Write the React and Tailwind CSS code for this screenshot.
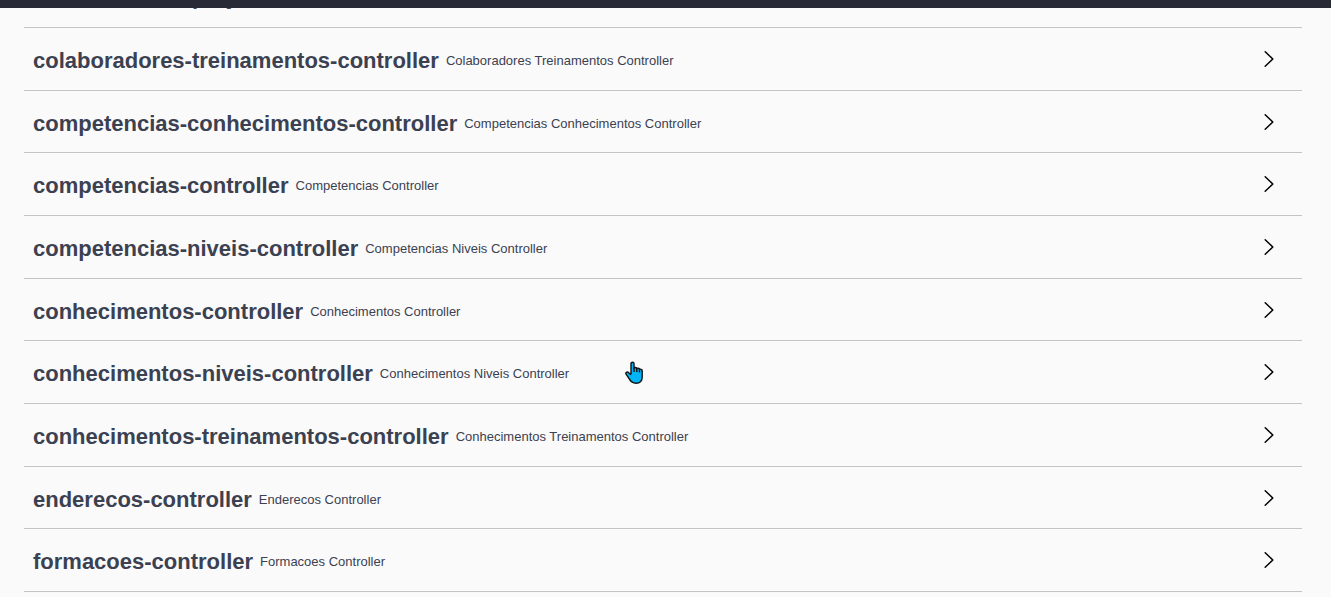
const controllers = [
  ["colaboradores-treinamentos-controller", "Colaboradores Treinamentos Controller"],
  ["competencias-conhecimentos-controller", "Competencias Conhecimentos Controller"],
  ["competencias-controller", "Competencias Controller"],
  ["competencias-niveis-controller", "Competencias Niveis Controller"],
  ["conhecimentos-controller", "Conhecimentos Controller"],
  ["conhecimentos-niveis-controller", "Conhecimentos Niveis Controller"],
  ["conhecimentos-treinamentos-controller", "Conhecimentos Treinamentos Controller"],
  ["enderecos-controller", "Enderecos Controller"],
  ["formacoes-controller", "Formacoes Controller"],
];

function Chevron() {
  return (
    <svg viewBox="0 0 10 16" className="h-4 w-[10px] shrink-0" fill="none" stroke="#000" strokeWidth="1.5" strokeLinecap="round" strokeLinejoin="round" aria-hidden="true">
      <path d="M1.2 0.8L8.8 8L1.2 15.2" />
    </svg>
  );
}

function Hand() {
  return (
    <svg viewBox="0 0 18 23" className="pointer-events-none absolute top-[361px] left-[625px] h-[23px] w-[18px]" aria-hidden="true">
      <path
        d="M6 13.5V2.6C6 .7 9 .7 9 2.6V7.2C9.5 6.1 11.6 6.3 11.8 7.6C12.5 6.8 14.3 7.2 14.5 8.4C15.5 7.8 17.2 8.3 17.2 9.8V16C17.2 20 14.8 22.2 11 22.2C7.6 22.2 6 21 4.4 18.2L1.1 13.2C.2 11.6 2 10.4 3.4 11.4L6 13.8"
        fill="#00b4f5" stroke="#111" strokeWidth="1.4" strokeLinejoin="round"
      />
      <path d="M9 7V11M11.8 7.6V11M14.5 8.4V11.5" fill="none" stroke="#111" strokeWidth="1.4" />
    </svg>
  );
}

export default function App() {
  return (
    <div className="relative flex min-h-screen flex-col bg-[#fafafa] font-['Liberation_Sans',Arial,sans-serif] text-[#3b4151]">
      <header className="relative z-10 h-2 bg-[#282a36]" />
      <main className="mr-[29px] ml-6 flex flex-1 flex-col pb-[5px]">
        <div className="flex h-5 items-end overflow-hidden border-b border-[#c4c4c6] px-[9px] pb-[18px]">
          <h3 className="text-[22px] leading-6 font-bold">colaboradores-projetos-controller</h3>
        </div>
        {controllers.map(([name, description]) => (
          <h3 key={name} className="flex min-h-12 flex-1 border-b border-[#c4c4c6]">
            <button type="button" aria-expanded="false" className="flex flex-1 cursor-pointer items-center pr-7 pl-[9px] text-left">
              <span className="pt-1 text-[22px] leading-6 font-bold">{name}</span>
              <span className="flex-1 pt-1 pl-[7px] text-[13px] leading-6">{description}</span>
              <Chevron />
            </button>
          </h3>
        ))}
      </main>
      <Hand />
    </div>
  );
}
